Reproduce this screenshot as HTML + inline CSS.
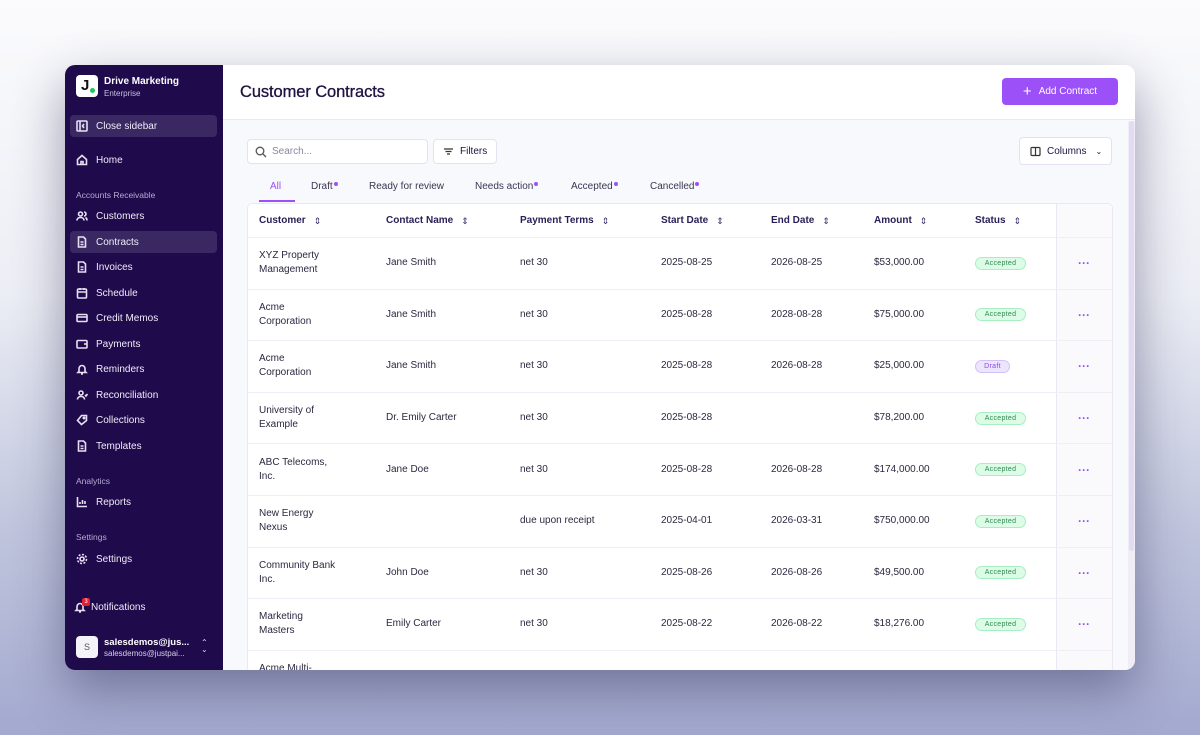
<!DOCTYPE html>
<html><head><meta charset="utf-8"><style>
*{box-sizing:border-box;margin:0;padding:0}
body{width:1200px;height:735px;overflow:hidden;font-family:"Liberation Sans",sans-serif;background:linear-gradient(180deg,#fbfbfd 0%,#eceef5 40%,#c0c5dd 72%,#a3a9cf 100%);position:relative}
.win{position:absolute;left:65px;top:65px;width:1070px;height:605px;border-radius:10px;overflow:hidden;background:#f8f9fc;box-shadow:0 20px 50px rgba(40,40,80,.45)}
.sb{position:absolute;left:0;top:0;width:158px;height:605px;background:#1f0a4c;color:#fff}
.sb .it{position:absolute;left:5px;width:147px;height:22px;display:flex;align-items:center;font-size:10px;padding-left:6px;color:#f0ecf8}
.sb .it svg{width:12px;height:12px;margin-right:8px;stroke:#e6e0f2;fill:none;stroke-width:1.6}
.sb .lbl{position:absolute;left:11px;font-size:8.5px;color:#b6acd0}
.act{background:#3a2863;border-radius:4px}
.main{position:absolute;left:158px;top:0;right:0;bottom:0}
.hdr{position:absolute;left:0;top:0;right:0;height:55px;background:#fff;border-bottom:1px solid #ebe8f3}
.hdr h1{position:absolute;left:17px;top:18px;font-size:16.5px;font-weight:normal;color:#1e1240;letter-spacing:-.1px;-webkit-text-stroke:.3px #1e1240}
.btn{position:absolute;right:17px;top:13px;width:116px;height:27px;background:#9b51f7;border-radius:4px;color:#fff;font-size:10px;display:flex;align-items:center;justify-content:center}
.box{position:absolute;background:#fff;border:1px solid #e5e1f1;border-radius:4px;font-size:10px;color:#1e1240;display:flex;align-items:center}
.tabs{position:absolute;top:116px;font-size:10px;color:#3b3552}
.dot{display:inline-block;width:4px;height:4px;border-radius:50%;background:#9b51f7;vertical-align:top;margin-left:1px;margin-top:1px}
.tbl{position:absolute;left:24px;top:138px;width:866px;height:480px;background:#fff;border:1px solid #ebe8f3;border-radius:5px;overflow:hidden}
.row{position:absolute;left:0;width:866px;border-bottom:1px solid #efedf6;font-size:10px;color:#2c2840}
.c{position:absolute;top:0;height:100%;display:flex;align-items:center;line-height:14px}
.th{font-weight:bold;color:#2a1e56;font-size:10px}
.ar{margin-left:8px;font-weight:normal;font-size:9px;color:#3a2e66}
.pill{font-size:7px;line-height:9px;padding:1px 0;width:51px;text-align:center;border-radius:7px;background:#dcfce7;border:1px solid #a7eec0;color:#2f8a4f;letter-spacing:.3px}
.draft{width:35px;background:#ede4fd;border-color:#d3c1f8;color:#8a4be6}
.actcol{position:absolute;left:808px;top:0;width:58px;height:100%;border-left:1px solid #ebe8f3;background:#fafafd}
.dots{position:absolute;left:830px;color:#9b51f7;font-size:12px;font-weight:bold;letter-spacing:0}
</style></head><body>
<div class="win">
<div class="sb">
<div style="position:absolute;left:11px;top:10px;width:22px;height:22px;background:#fff;border-radius:4px;"><span style="position:absolute;left:5px;top:2px;font-weight:bold;font-size:15px;color:#111">J</span><span style="position:absolute;left:14px;top:13px;width:5px;height:5px;border-radius:50%;background:#22c55e"></span></div>
<div style="position:absolute;left:39px;top:11px;font-size:10px;font-weight:bold">Drive Marketing</div>
<div style="position:absolute;left:39px;top:24px;font-size:8px;color:#c9c0de">Enterprise</div>
<div class="it act" style="top:50px"><svg viewBox="0 0 12 12"><rect x="1" y="1" width="10" height="10" rx="1"/><path d="M4 1v10M8 4L6.5 6 8 8"/></svg>Close sidebar</div>
<div class="it" style="top:84px"><svg viewBox="0 0 12 12"><path d="M1.5 5.5L6 1.5l4.5 4v5h-9z M5 10.5V7.5h2v3"/></svg>Home</div>
<div class="lbl" style="top:125px">Accounts Receivable</div>
<div class="it" style="top:140px"><svg viewBox="0 0 12 12"><circle cx="4.5" cy="4" r="2"/><path d="M1 10.5c0-2 1.5-3 3.5-3s3.5 1 3.5 3M8 2a2 2 0 010 4M9.5 7.5c1 .5 1.5 1.5 1.5 3"/></svg>Customers</div>
<div class="it act" style="top:166px"><svg viewBox="0 0 12 12"><path d="M2.5 1h5l2 2v8h-7z M4.5 6h3M4.5 8.5h3"/></svg>Contracts</div>
<div class="it" style="top:191px"><svg viewBox="0 0 12 12"><path d="M2.5 1h5l2 2v8h-7z M4.5 6h3M4.5 8.5h3"/></svg>Invoices</div>
<div class="it" style="top:217px"><svg viewBox="0 0 12 12"><rect x="1.5" y="2" width="9" height="9" rx="1"/><path d="M1.5 5h9M4 1v2M8 1v2"/></svg>Schedule</div>
<div class="it" style="top:242px"><svg viewBox="0 0 12 12"><rect x="1" y="2.5" width="10" height="7" rx="1"/><path d="M1 5h10"/></svg>Credit Memos</div>
<div class="it" style="top:268px"><svg viewBox="0 0 12 12"><rect x="1" y="2.5" width="10" height="7.5" rx="1"/><path d="M8 6h3"/></svg>Payments</div>
<div class="it" style="top:293px"><svg viewBox="0 0 12 12"><path d="M3 8.5V5.5a3 3 0 016 0v3l1 1H2z M5 11h2"/></svg>Reminders</div>
<div class="it" style="top:319px"><svg viewBox="0 0 12 12"><circle cx="5" cy="4" r="2"/><path d="M1.5 10.5c0-2 1.5-3 3.5-3s3.5 1 3.5 3M9 6l1 1 1.5-2"/></svg>Reconciliation</div>
<div class="it" style="top:344px"><svg viewBox="0 0 12 12"><path d="M1.5 6.5l4-5h5v5l-5 4z"/><circle cx="8" cy="4" r=".7"/></svg>Collections</div>
<div class="it" style="top:370px"><svg viewBox="0 0 12 12"><path d="M2.5 1h5l2 2v8h-7z M4.5 6h3M4.5 8.5h3"/></svg>Templates</div>
<div class="lbl" style="top:411px">Analytics</div>
<div class="it" style="top:426px"><svg viewBox="0 0 12 12"><path d="M1.5 1v9.5h9.5M4 8V6M6.5 8V4M9 8V5"/></svg>Reports</div>
<div class="lbl" style="top:467px">Settings</div>
<div class="it" style="top:483px"><svg viewBox="0 0 12 12"><circle cx="6" cy="6" r="2"/><circle cx="6" cy="6" r="4.5" stroke-dasharray="2 1.5"/></svg>Settings</div>
<div class="it" style="top:531px;left:3px"><svg viewBox="0 0 12 12" style="margin-right:5px"><path d="M3 8.5V5.5a3 3 0 016 0v3l1 1H2z M5 11h2"/></svg>Notifications</div>
<div style="position:absolute;left:17px;top:533px;width:8px;height:8px;background:#e11d2e;border-radius:2px;font-size:6px;text-align:center;line-height:8px">3</div>
<div style="position:absolute;left:11px;top:571px;width:22px;height:22px;background:#f4f4f8;border-radius:4px;color:#555;font-size:9px;text-align:center;line-height:22px">S</div>
<div style="position:absolute;left:39px;top:572px;font-size:9.5px;font-weight:bold">salesdemos@jus...</div>
<div style="position:absolute;left:39px;top:584px;font-size:8px;color:#d8d0ea">salesdemos@justpai...</div>
<div style="position:absolute;left:136px;top:574px;font-size:8px;color:#ddd;line-height:7px">⌃<br>⌄</div>
</div>
<div class="main">
<div class="hdr"><h1>Customer Contracts</h1><div class="btn"><span style="font-size:15px;margin-right:7px;font-weight:normal">+</span>Add Contract</div></div>
<div style="position:absolute;right:0;top:56px;width:7px;height:549px;background:#f0edf7"><div style="margin:0 1px;width:5px;height:430px;background:#e3dbf4;border-radius:3px"></div></div>
<div class="box" style="left:24px;top:74px;width:181px;height:25px;color:#8a86a0;padding-left:7px"><svg width="12" height="12" viewBox="0 0 12 12" fill="none" stroke="#555" stroke-width="1.3" style="margin-right:5px"><circle cx="5" cy="5" r="3.8"/><path d="M8 8l3 3"/></svg>Search...</div>
<div class="box" style="left:210px;top:74px;width:64px;height:25px;padding-left:9px"><svg width="11" height="11" viewBox="0 0 11 11" stroke="#333" stroke-width="1.2" style="margin-right:6px"><path d="M1 3h9M2.5 5.5h6M4 8h3"/></svg>Filters</div>
<div class="box" style="left:796px;top:72px;width:93px;height:28px;padding-left:10px"><svg width="11" height="11" viewBox="0 0 11 11" fill="none" stroke="#333" stroke-width="1.2" style="margin-right:6px"><rect x="1" y="1.5" width="9" height="8" rx="1"/><path d="M5.5 1.5v8"/></svg>Columns<span style="margin-left:9px;font-size:8px">⌄</span></div>
<div class="tabs" style="left:47px;color:#9b51f7">All</div>
<div style="position:absolute;left:36px;top:135px;width:36px;height:2px;background:#9b51f7"></div>
<div class="tabs" style="left:88px">Draft<span class="dot"></span></div>
<div class="tabs" style="left:146px">Ready for review</div>
<div class="tabs" style="left:252px">Needs action<span class="dot"></span></div>
<div class="tabs" style="left:348px">Accepted<span class="dot"></span></div>
<div class="tabs" style="left:427px">Cancelled<span class="dot"></span></div>
<div class="tbl">
<div class="actcol"></div>
<div class="row" style="top:0;height:34px">
<div class="c th" style="left:11px">Customer<span class="ar">⇕</span></div>
<div class="c th" style="left:138px">Contact Name<span class="ar">⇕</span></div>
<div class="c th" style="left:272px">Payment Terms<span class="ar">⇕</span></div>
<div class="c th" style="left:413px">Start Date<span class="ar">⇕</span></div>
<div class="c th" style="left:523px">End Date<span class="ar">⇕</span></div>
<div class="c th" style="left:626px">Amount<span class="ar">⇕</span></div>
<div class="c th" style="left:727px">Status<span class="ar">⇕</span></div>
</div>
<div class="row" style="top:34px;height:51.6px"><div class="c" style="left:11px">XYZ Property<br>Management</div><div class="c" style="left:138px">Jane Smith</div><div class="c" style="left:272px">net 30</div><div class="c" style="left:413px">2025-08-25</div><div class="c" style="left:523px">2026-08-25</div><div class="c" style="left:626px">$53,000.00</div><div class="c" style="left:727px"><span class="pill">Accepted</span></div><div class="c dots">···</div></div>
<div class="row" style="top:85.6px;height:51.6px"><div class="c" style="left:11px">Acme<br>Corporation</div><div class="c" style="left:138px">Jane Smith</div><div class="c" style="left:272px">net 30</div><div class="c" style="left:413px">2025-08-28</div><div class="c" style="left:523px">2028-08-28</div><div class="c" style="left:626px">$75,000.00</div><div class="c" style="left:727px"><span class="pill">Accepted</span></div><div class="c dots">···</div></div>
<div class="row" style="top:137.2px;height:51.6px"><div class="c" style="left:11px">Acme<br>Corporation</div><div class="c" style="left:138px">Jane Smith</div><div class="c" style="left:272px">net 30</div><div class="c" style="left:413px">2025-08-28</div><div class="c" style="left:523px">2026-08-28</div><div class="c" style="left:626px">$25,000.00</div><div class="c" style="left:727px"><span class="pill draft">Draft</span></div><div class="c dots">···</div></div>
<div class="row" style="top:188.8px;height:51.6px"><div class="c" style="left:11px">University of<br>Example</div><div class="c" style="left:138px">Dr. Emily Carter</div><div class="c" style="left:272px">net 30</div><div class="c" style="left:413px">2025-08-28</div><div class="c" style="left:626px">$78,200.00</div><div class="c" style="left:727px"><span class="pill">Accepted</span></div><div class="c dots">···</div></div>
<div class="row" style="top:240.4px;height:51.6px"><div class="c" style="left:11px">ABC Telecoms,<br>Inc.</div><div class="c" style="left:138px">Jane Doe</div><div class="c" style="left:272px">net 30</div><div class="c" style="left:413px">2025-08-28</div><div class="c" style="left:523px">2026-08-28</div><div class="c" style="left:626px">$174,000.00</div><div class="c" style="left:727px"><span class="pill">Accepted</span></div><div class="c dots">···</div></div>
<div class="row" style="top:292px;height:51.6px"><div class="c" style="left:11px">New Energy<br>Nexus</div><div class="c" style="left:272px">due upon receipt</div><div class="c" style="left:413px">2025-04-01</div><div class="c" style="left:523px">2026-03-31</div><div class="c" style="left:626px">$750,000.00</div><div class="c" style="left:727px"><span class="pill">Accepted</span></div><div class="c dots">···</div></div>
<div class="row" style="top:343.6px;height:51.6px"><div class="c" style="left:11px">Community Bank<br>Inc.</div><div class="c" style="left:138px">John Doe</div><div class="c" style="left:272px">net 30</div><div class="c" style="left:413px">2025-08-26</div><div class="c" style="left:523px">2026-08-26</div><div class="c" style="left:626px">$49,500.00</div><div class="c" style="left:727px"><span class="pill">Accepted</span></div><div class="c dots">···</div></div>
<div class="row" style="top:395.2px;height:51.6px"><div class="c" style="left:11px">Marketing<br>Masters</div><div class="c" style="left:138px">Emily Carter</div><div class="c" style="left:272px">net 30</div><div class="c" style="left:413px">2025-08-22</div><div class="c" style="left:523px">2026-08-22</div><div class="c" style="left:626px">$18,276.00</div><div class="c" style="left:727px"><span class="pill">Accepted</span></div><div class="c dots">···</div></div>
<div class="row" style="top:446.8px;height:51.6px"><div class="c" style="left:11px">Acme Multi-<br>&nbsp;</div><div class="c" style="left:727px"><span class="pill">Accepted</span></div></div>
</div>
</div>
</div>
</body></html>
